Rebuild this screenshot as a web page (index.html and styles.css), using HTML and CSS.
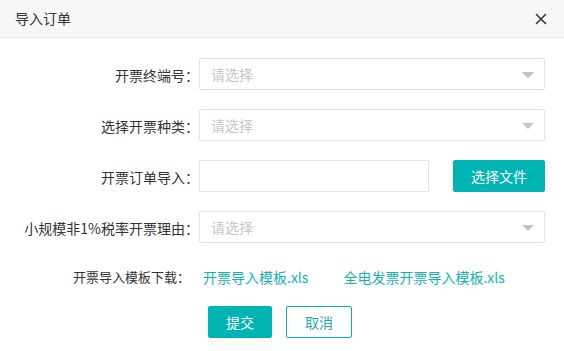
FILE: index.html
```html
<!DOCTYPE html>
<html lang="zh-CN">
<head>
  <meta charset="UTF-8" />
  <title>导入订单</title>
  <link rel="stylesheet" href="styles.css">
</head>
<body>
  <div class="dialog">
    <div class="dialog-header">
      <span class="dialog-title">导入订单</span>
      <svg class="close-icon" width="12" height="12" viewBox="0 0 12 12">
        <path d="M1 1 L11 11 M11 1 L1 11" stroke="#333" stroke-width="1.5" fill="none"/>
      </svg>
    </div>

    <div class="dialog-body">
      <div class="form-row">
        <label class="form-label">开票终端号：</label>
        <div class="select-box">
          <span class="placeholder">请选择</span>
          <span class="caret"></span>
        </div>
      </div>

      <div class="form-row">
        <label class="form-label">选择开票种类：</label>
        <div class="select-box">
          <span class="placeholder">请选择</span>
          <span class="caret"></span>
        </div>
      </div>

      <div class="form-row">
        <label class="form-label">开票订单导入：</label>
        <div class="file-input"></div>
        <button class="btn btn-primary btn-file">选择文件</button>
      </div>

      <div class="form-row">
        <label class="form-label">小规模非1%税率开票理由：</label>
        <div class="select-box">
          <span class="placeholder">请选择</span>
          <span class="caret"></span>
        </div>
      </div>

      <div class="download-row">
        <span class="download-label">开票导入模板下载：</span>
        <a class="download-link" href="#">开票导入模板.xls</a>
        <a class="download-link second" href="#">全电发票开票导入模板.xls</a>
      </div>

      <div class="dialog-footer">
        <button class="btn btn-primary">提交</button>
        <button class="btn btn-default">取消</button>
      </div>
    </div>
  </div>
</body>
</html>
```

FILE: styles.css
```css
body {
  margin: 0;
  padding: 0;
  background-color: #fff;
  font-family: "Noto Sans CJK SC", "Noto Sans", sans-serif;
  color: #333;
}

.dialog {
  width: 564px;
  height: 351px;
  background: #fff;
}

.dialog-header {
  height: 37px;
  display: flex;
  align-items: center;
  justify-content: space-between;
  padding: 0 17px 0 15px;
  background-color: #f7f7f7;
  border-bottom: 1px solid #e8e8e8;
}

.dialog-title {
  font-size: 14px;
  line-height: 20px;
  color: #333;
  margin-top: -2px;
}

.close-icon {
  display: block;
  margin-top: 1px;
}

.dialog-body {
  padding-top: 20px;
}

.form-row {
  display: flex;
  align-items: center;
  height: 32px;
  margin-bottom: 19px;
}

.form-label {
  flex: 0 0 199px;
  text-align: right;
  font-size: 14px;
  line-height: 20px;
  color: #333;
  margin-top: 2px;
}

.select-box {
  width: 346px;
  height: 32px;
  box-sizing: border-box;
  border: 1px solid #e2e2e2;
  border-radius: 2px;
  display: flex;
  align-items: center;
  justify-content: space-between;
  padding: 0 10px 0 11px;
}

.placeholder {
  font-size: 14px;
  color: #c6c6c6;
  line-height: 20px;
}

.caret {
  width: 0;
  height: 0;
  border-left: 6px solid transparent;
  border-right: 6px solid transparent;
  border-top: 6px solid #c2c2c2;
  margin-top: 1px;
}

.file-input {
  width: 230px;
  height: 32px;
  box-sizing: border-box;
  border: 1px solid #e2e2e2;
  border-radius: 2px;
}

.btn {
  height: 32px;
  box-sizing: border-box;
  border-radius: 2px;
  font-family: inherit;
  font-size: 14px;
  line-height: 20px;
  padding: 0;
  cursor: pointer;
}

.btn-primary {
  width: 64px;
  background-color: #00b4b4;
  border: 1px solid #00b4b4;
  color: #fff;
}

.btn-default {
  width: 66px;
  background-color: #fff;
  border: 1px solid #00b4b4;
  color: #2aa8a8;
}

.btn-file {
  width: 92px;
  margin-left: 24px;
}

.download-row {
  display: flex;
  align-items: center;
  height: 30px;
  margin-top: 0;
}

.download-label {
  flex: 0 0 199px;
  box-sizing: border-box;
  padding-right: 9px;
  text-align: right;
  font-size: 13px;
  line-height: 20px;
  color: #333;
}

.download-link {
  font-size: 14px;
  line-height: 20px;
  color: #14b1b1;
  text-decoration: none;
  margin-left: 4px;
}

.download-link.second {
  margin-left: 35px;
}

.dialog-footer {
  display: flex;
  justify-content: center;
  gap: 14px;
  padding-right: 4px;
  margin-top: 14px;
}
```
